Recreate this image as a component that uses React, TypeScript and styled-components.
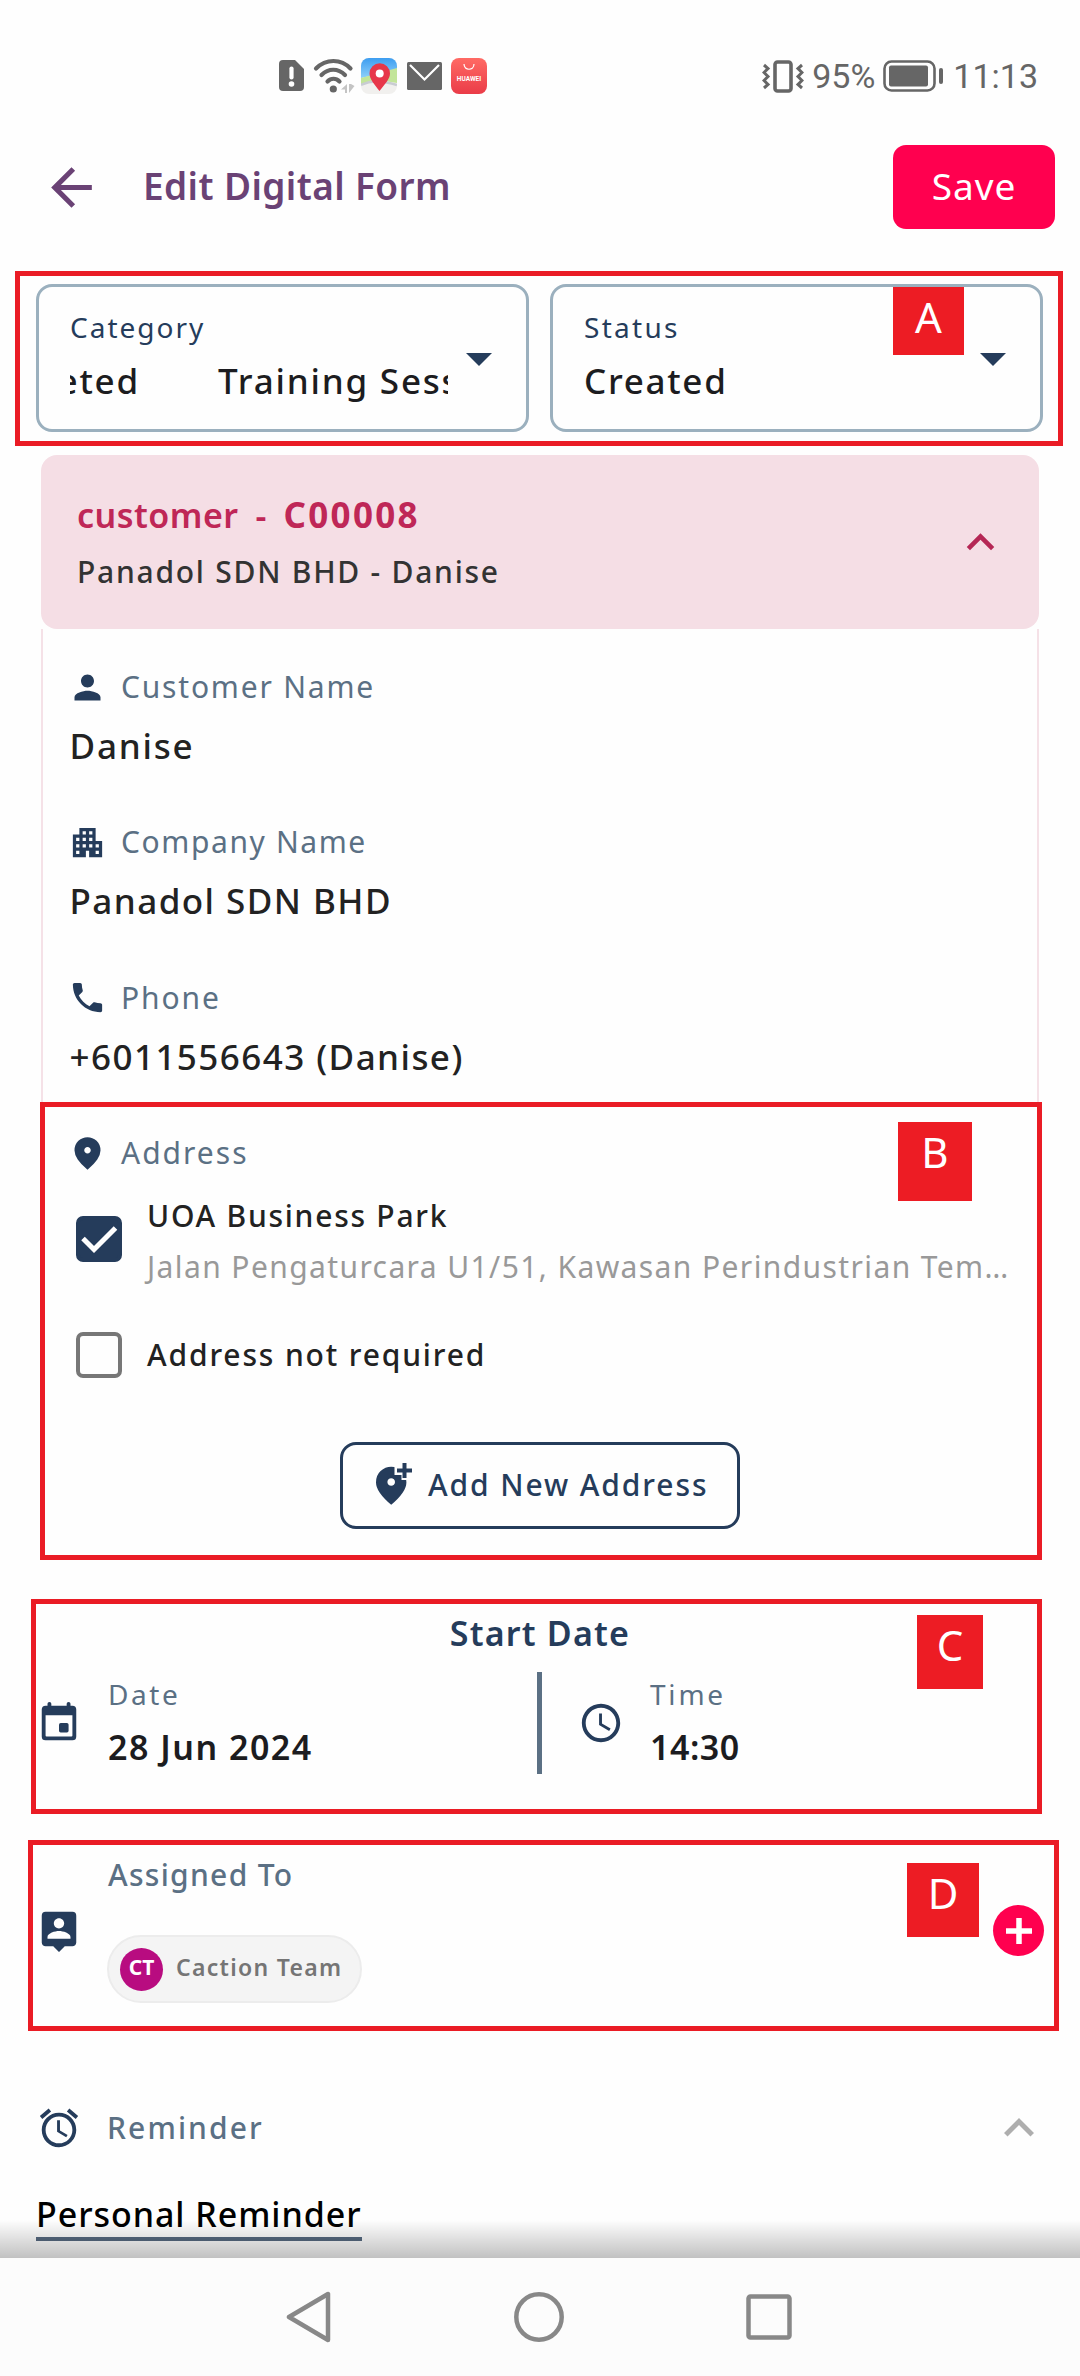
import React from "react";
import styled, { createGlobalStyle } from "styled-components";
import {
  MdAccessAlarm,
  MdApartment,
  MdArrowBack,
  MdExpandLess,
  MdOutlineAccessTime,
  MdPerson,
  MdPhone,
} from "react-icons/md";

const navy = "#253c5b";
const slate = "#5b7084";
const red = "#ea1c25";
const hotPink = "#ff004f";

const GlobalStyle = createGlobalStyle`
  * { box-sizing: border-box; }
  body { margin: 0; background: #fefefe; }
  svg { display: block; flex: none; }
`;

const Phone = styled.div`
  width: 1080px;
  height: 2376px;
  display: flex;
  flex-direction: column;
  background: #fefefe;
  font-family: "Noto Sans", "Open Sans", sans-serif;
  overflow: hidden;
`;

const Screen = styled.main`
  position: relative;
  height: 2258px;
  flex: none;
  overflow: hidden;
`;

const BottomShade = styled.div`
  position: absolute;
  left: 0;
  right: 0;
  bottom: 0;
  height: 38px;
  background: linear-gradient(rgba(0, 0, 0, 0), rgba(0, 0, 0, 0.12) 50%, rgba(0, 0, 0, 0.24));
`;

type TextProps = { $size: number; $line: number; $gap?: number; $weight?: number; $color: string };

const Text = styled.span<TextProps>`
  display: block;
  white-space: pre;
  font-size: ${(p) => p.$size}px;
  line-height: ${(p) => p.$line}px;
  letter-spacing: ${(p) => p.$gap ?? 0}px;
  font-weight: ${(p) => p.$weight ?? 400};
  color: ${(p) => p.$color};
`;

/* Status bar */

const StatusBar = styled.div`
  height: 120px;
  display: flex;
  align-items: center;
  justify-content: space-between;
  padding: 32px 42px 0 279px;
  font-family: Roboto, "Noto Sans", sans-serif;
`;

const StatusGroup = styled.div<{ $gap: number }>`
  display: flex;
  align-items: center;
  gap: ${(p) => p.$gap}px;
`;

const AppTile = styled.div`
  width: 36px;
  height: 36px;
  border-radius: 8px;
  background: linear-gradient(#ff6a64, #ea3c48);
  display: flex;
  flex-direction: column;
  align-items: center;
  padding-top: 6px;
  color: #fff;
  font: 700 6.5px/8px Roboto, sans-serif;
  gap: 4px;
`;

/* Header */

const Header = styled.header`
  height: 134px;
  display: flex;
  align-items: center;
  padding: 0 25px 0 41px;
`;

const HeaderTitle = styled.div`
  flex: 1;
  padding: 0 0 3px 41px;
`;

const SaveButton = styled.button`
  width: 162px;
  height: 84px;
  border: 0;
  border-radius: 13px;
  background: ${hotPink};
  display: flex;
  justify-content: center;
  align-items: center;
  padding: 0 0 3px;
  font-family: inherit;
`;

/* Highlight frames */

const Frame = styled.section<{ $left: number; $width: number; $height: number; $top: number }>`
  position: relative;
  margin: ${(p) => p.$top}px 0 0 ${(p) => p.$left}px;
  width: ${(p) => p.$width}px;
  height: ${(p) => p.$height}px;
  border: 5px solid ${red};
`;

const Badge = styled.div<{ $x: number; $y: number; $w: number; $h: number }>`
  position: absolute;
  left: ${(p) => p.$x}px;
  top: ${(p) => p.$y}px;
  width: ${(p) => p.$w}px;
  height: ${(p) => p.$h}px;
  background: #ed1c24;
  color: #fff;
  text-align: center;
  font-size: 42px;
  line-height: 59px;
`;

/* Selects */

const SelectRow = styled.div`
  display: flex;
  gap: 21px;
  padding: 8px 0 0 16px;
`;

const Select = styled.div`
  width: 493px;
  height: 148px;
  border: 3px solid #9bb0be;
  border-radius: 16px;
  display: flex;
  align-items: flex-start;
  padding: 18px 0 0 31px;
`;

const SelectText = styled.div`
  width: 378px;
  display: flex;
  flex-direction: column;
  gap: 7px;
`;

const Marquee = styled.div`
  display: flex;
  justify-content: flex-start;
  gap: 78px;
  overflow: hidden;
`;

const MarqueeTail = styled.div`
  width: 70px;
  flex: none;
  display: flex;
  justify-content: flex-end;
  overflow: hidden;
`;

const Caret = styled.svg`
  width: 26px;
  height: 13px;
  margin: 48px 0 0 18px;
`;

/* Customer card */

const CardHead = styled.div`
  width: 998px;
  height: 174px;
  margin: 9px 0 0 41px;
  border-radius: 16px;
  background: #f5dee5;
  display: flex;
  align-items: center;
  justify-content: space-between;
  padding: 0 31px 0 36px;
`;

const CardHeadText = styled.div`
  display: flex;
  flex-direction: column;
  gap: 11px;
`;

const CardCode = styled.div`
  display: flex;
  gap: 17px;
`;

const CardBody = styled.div`
  width: 998px;
  height: 473px;
  margin-left: 41px;
  border: solid #f5e1e7;
  border-width: 0 2px;
  padding: 36px 0 0 25px;
`;

const Detail = styled.div`
  height: 155.4px;
  display: flex;
  flex-direction: column;
  gap: 12px;
`;

const DetailValue = styled.div`
  padding-left: 1.5px;
`;

const IconLabel = styled.div`
  display: flex;
  align-items: center;
  gap: 14px;
  color: ${navy};
`;

/* Address */

const AddressBody = styled.div`
  padding: 24px 0 0 23px;
`;

const CheckRow = styled.label<{ $top: number }>`
  display: flex;
  align-items: center;
  gap: 25px;
  margin: ${(p) => p.$top}px 0 0 8px;
`;

const CheckLines = styled.div`
  display: flex;
  flex-direction: column;
  gap: 7px;
`;

const CheckBox = styled.span<{ $on?: boolean }>`
  width: 46px;
  height: 46px;
  flex: none;
  margin-bottom: ${(p) => (p.$on ? 6 : 0)}px;
  border-radius: 7px;
  border: 4px solid ${(p) => (p.$on ? navy : "#777")};
  background: ${(p) => (p.$on ? navy : "transparent")};
  display: flex;
  align-items: center;
  justify-content: center;
`;

const AddButton = styled.button`
  width: 400px;
  height: 87px;
  margin: 64px 0 0 272px;
  border: 3px solid ${navy};
  border-radius: 16px;
  background: transparent;
  display: flex;
  align-items: center;
  padding: 0 0 2px 32px;
  gap: 14px;
  font-family: inherit;
`;

/* Start date */

const StartBody = styled.div`
  width: 1008px;
  display: flex;
  flex-direction: column;
  align-items: center;
  padding-top: 5px;
  gap: 15px;
`;

const DateRow = styled.div`
  width: 100%;
  height: 102px;
  display: flex;
  align-items: center;
  color: ${navy};
`;

const DateCell = styled.div<{ $w: number }>`
  width: ${(p) => p.$w}px;
  display: flex;
  align-items: center;
  gap: 26px;
`;

const DateLines = styled.div`
  display: flex;
  flex-direction: column;
  gap: 10px;
  padding-bottom: 3px;
`;

const Rule = styled.div`
  width: 5px;
  height: 102px;
  margin-right: 36px;
  background: ${slate};
`;

/* Assigned to */

const AssignBody = styled.div`
  height: 171px;
  display: flex;
  align-items: center;
  padding: 0 10px 0 3px;
  color: ${navy};
`;

const AssignLines = styled.div`
  flex: 1;
  align-self: flex-start;
  padding: 8px 0 0 25px;
  display: flex;
  flex-direction: column;
  align-items: flex-start;
  gap: 38px;
`;

const AssignLabel = styled.div`
  padding-left: 1px;
`;

const Chip = styled.div`
  width: 255px;
  height: 68px;
  border: 2px solid #ececec;
  border-radius: 34px;
  background: #f4f4f4;
  display: flex;
  align-items: center;
  gap: 13px;
  padding-left: 11px;
`;

const ChipName = styled.div`
  padding-bottom: 4px;
`;

const Avatar = styled.div`
  width: 43px;
  height: 43px;
  border-radius: 50%;
  background: #b80c80;
  display: flex;
  justify-content: center;
`;

const RoundAdd = styled.button`
  width: 51px;
  height: 51px;
  border: 0;
  border-radius: 50%;
  background: ${hotPink};
  padding: 0;
  display: flex;
  align-items: center;
  justify-content: center;
`;

/* Reminder */

const ReminderRow = styled.div`
  margin-top: 72px;
  height: 50px;
  display: flex;
  align-items: center;
  padding: 0 31px 0 36px;
  color: ${navy};
`;

const ReminderLabel = styled.div`
  flex: 1;
  padding-left: 25px;
`;

const ReminderLink = styled.div`
  width: 326px;
  margin: 38px 0 0 36px;
  border-bottom: 4px solid #566980;
`;

const NavBar = styled.nav`
  height: 118px;
  flex: none;
  background: #fcfcfc;
  display: flex;
  align-items: center;
  justify-content: space-between;
  padding: 0 288px 0 285px;
`;

const pinPath =
  "M12 12q.825 0 1.413-.588T14 10t-.588-1.413T12 8t-1.413.588T10 10t.588 1.413T12 12m0 10q-4.025-3.425-6.012-6.362T4 10.2q0-3.75 2.413-5.975T12 2t5.588 2.225T20 10.2q0 2.5-1.987 5.438T12 22";

const SimIcon = () => (
  <svg width="26" height="32" viewBox="0 0 26 32">
    <path d="M4 0h12l9 9v18a4 4 0 0 1-4 4H4a4 4 0 0 1-4-4V4a4 4 0 0 1 4-4z" fill="#666" />
    <path d="M12.5 8.500v9" stroke="#fff" strokeWidth="4.200" strokeLinecap="round" />
    <circle cx="12.500" cy="24" r="2.800" fill="#fff" />
  </svg>
);

const WifiIcon = () => (
  <svg width="38" height="34" viewBox="0 0 38 34" overflow="visible">
    <g fill="none" stroke="#666" strokeWidth="4.200" strokeLinecap="round">
      <path d="M2 9.500C12-.5 27-.5 36.500 9.500" />
      <path d="M7.500 16C14.500 9 24 9 31 16" />
      <path d="M13.500 22.500c3.500-3.500 8.500-3.500 12 0" />
    </g>
    <circle cx="19.300" cy="30" r="3.600" fill="#666" />
    <path d="M33 25v9h-2v-3.500h-4zM35 34v-9h2l3.500 2z" fill="#c4c4c4" />
  </svg>
);

const MapsIcon = () => (
  <svg width="37" height="36" viewBox="0 0 37 36">
    <defs>
      <clipPath id="tile">
        <rect width="36" height="36" rx="8" />
      </clipPath>
      <linearGradient id="sky" x2="0" y2="1">
        <stop offset="0" stopColor="#3d9df0" />
        <stop offset="1" stopColor="#8ed0fa" />
      </linearGradient>
    </defs>
    <g clipPath="url(#tile)">
      <rect width="36" height="36" fill="#f1f0ee" />
      <path d="M0 0h36v12L0 20z" fill="url(#sky)" />
      <path d="M36 10v15L18 22 0 27V20z" fill="#c3e59a" />
      <path d="M0 27c10-5 24-4 36 0" fill="none" stroke="#c9ccd2" strokeWidth="2.500" />
    </g>
    <path d="M18.500 33C13 26 8.500 21 8.500 15.500a10 10 0 0 1 20.500 0C29 21 24 26 18.500 33z" fill="#e7374a" />
    <circle cx="18.700" cy="15.500" r="4" fill="#fff" />
  </svg>
);

const MailIcon = () => (
  <svg width="35" height="28" viewBox="0 0 35 28">
    <rect width="35" height="28" rx="1.500" fill="#666" />
    <path d="M3 3l14.500 14.500L32 3" fill="none" stroke="#fff" strokeWidth="2.200" />
  </svg>
);

const VibrateIcon = () => (
  <svg width="42" height="33" viewBox="0 0 42 33">
    <rect x="13" y="2" width="16" height="29" rx="2.500" fill="none" stroke="#666" strokeWidth="3.600" />
    <g fill="none" stroke="#666" strokeWidth="3">
      <path d="M2 5l4 3.500-4 4 4 4-4 4 4 4-4 3.500" />
      <path d="M40 5l-4 3.500 4 4-4 4 4 4-4 4 4 3.500" />
    </g>
  </svg>
);

const BatteryIcon = () => (
  <svg width="62" height="32" viewBox="0 0 62 32">
    <rect x="1.500" y="1.500" width="50" height="29" rx="7" fill="none" stroke="#666" strokeWidth="2.600" />
    <rect x="6" y="5.500" width="39" height="21" rx="2" fill="#666" />
    <rect x="56" y="8" width="4" height="16" rx="2" fill="#666" />
  </svg>
);

const PinIcon = () => (
  <svg width="39" height="39" viewBox="0 0 24 24" fill="currentColor">
    <path d={pinPath} />
  </svg>
);

const AddPinIcon = () => (
  <svg width="39" height="46" viewBox="0 0 39 46">
    <g transform="translate(-6.600 1) scale(1.900)">
      <path d={pinPath} fill={navy} />
    </g>
    <path d="M19.500 3h6V0H39v18H26.500v-5h-7z" fill="#fefefe" />
    <path d="M29.500 1v15M22 8.500h15" stroke={navy} strokeWidth="4" />
    <path d="M26.500 13h3.500v4.500h-3.500z" fill="none" />
  </svg>
);

const CalendarIcon = () => (
  <svg width="46" height="46" viewBox="0 0 24 24" fill="currentColor">
    <path
      fillRule="evenodd"
      d="M7 1a1 1 0 0 1 1 1v1h8V2a1 1 0 0 1 2 0v1h1a2 2 0 0 1 2 2v14a2 2 0 0 1-2 2H5a2 2 0 0 1-2-2V5a2 2 0 0 1 2-2h1V2a1 1 0 0 1 1-1zM5 8v10.500a.5.5 0 0 0 .5.500h13a.5.5 0 0 0 .5-.5V8z"
    />
    <rect x="12" y="12" width="5" height="5" rx="0.900" />
  </svg>
);

const AssigneeIcon = () => (
  <svg width="46" height="46" viewBox="0 0 24 24" fill="currentColor">
    <path d="M19 2H5a2 2 0 0 0-2 2v14c0 1.100.9 2 2 2h4l3 3 3-3h4c1.100 0 2-.9 2-2V4a2 2 0 0 0-2-2zm-7 3.300c1.490 0 2.700 1.210 2.700 2.700s-1.210 2.700-2.700 2.700S9.300 9.490 9.300 8s1.210-2.700 2.700-2.700zM18 16H6v-.9c0-2 4-3.100 6-3.100s6 1.100 6 3.100v.9z" />
  </svg>
);

const DownCaret = () => (
  <Caret viewBox="0 0 26 13">
    <path d="M0 0h26L13 13z" fill={navy} />
  </Caret>
);

type DetailItemProps = { icon: React.ReactNode; label: string; value: string; labelGap: number; valueGap: number };

const DetailItem = ({ icon, label, value, labelGap, valueGap }: DetailItemProps) => (
  <Detail>
    <IconLabel>
      {icon}
      <Text $size={30} $line={44} $gap={labelGap} $color={slate}>{label}</Text>
    </IconLabel>
    <DetailValue>
      <Text $size={35} $line={50} $gap={valueGap} $weight={500} $color="#222">{value}</Text>
    </DetailValue>
  </Detail>
);

export default function App() {
  return (
    <Phone>
      <GlobalStyle />
      <Screen>
        <StatusBar>
          <StatusGroup $gap={9}>
            <SimIcon />
            <WifiIcon />
            <MapsIcon />
            <MailIcon />
            <AppTile>
              <svg width="12" height="7" viewBox="0 0 12 7">
                <path d="M1 0c0 7 10 7 10 0" fill="none" stroke="#fff" strokeWidth="1.200" />
              </svg>
              HUAWEI
            </AppTile>
          </StatusGroup>
          <StatusGroup $gap={8}>
            <VibrateIcon />
            <Text $size={34} $line={40} $color="#666">95%</Text>
            <BatteryIcon />
            <Text $size={34} $line={40} $color="#666">11:13</Text>
          </StatusGroup>
        </StatusBar>

        <Header>
          <MdArrowBack size={61} color="#6a4275" />
          <HeaderTitle>
            <Text $size={37} $line={50} $gap={0.4} $weight={600} $color="#6a4275">Edit Digital Form</Text>
          </HeaderTitle>
          <SaveButton>
            <Text $size={37} $line={50} $gap={1} $color="#fff">Save</Text>
          </SaveButton>
        </Header>

        <Frame $left={15} $top={17} $width={1048} $height={175}>
          <SelectRow>
            <Select>
              <SelectText>
                <Text $size={28} $line={44} $gap={2} $color={navy}>Category</Text>
                <Marquee>
                  <MarqueeTail>
                    <Text $size={35} $line={50} $gap={1.8} $weight={500} $color="#1c1c20">eted</Text>
                  </MarqueeTail>
                  <Text $size={35} $line={50} $gap={1.8} $weight={500} $color="#1c1c20">Training Sess</Text>
                </Marquee>
              </SelectText>
              <DownCaret />
            </Select>
            <Select>
              <SelectText>
                <Text $size={28} $line={44} $gap={2.3} $color={navy}>Status</Text>
                <Text $size={35} $line={50} $gap={1.7} $weight={500} $color="#1c1c20">Created</Text>
              </SelectText>
              <DownCaret />
            </Select>
          </SelectRow>
          <Badge $x={873} $y={11} $w={71} $h={68}>A</Badge>
        </Frame>

        <CardHead>
          <CardHeadText>
            <CardCode>
              <Text $size={34} $line={48} $gap={0.5} $weight={600} $color="#bf2757">customer</Text>
              <Text $size={34} $line={48} $weight={600} $color="#bf2757">-</Text>
              <Text $size={35} $line={48} $gap={2.3} $weight={700} $color="#bf2757">C00008</Text>
            </CardCode>
            <Text $size={30} $line={44} $gap={1.75} $weight={500} $color="#333">Panadol SDN BHD - Danise</Text>
          </CardHeadText>
          <MdExpandLess size={55} color="#b52755" />
        </CardHead>

        <CardBody>
          <DetailItem icon={<MdPerson size={39} />} label="Customer Name" value="Danise" labelGap={1.8} valueGap={1.8} />
          <DetailItem icon={<MdApartment size={39} />} label="Company Name" value="Panadol SDN BHD" labelGap={1.6} valueGap={1.45} />
          <DetailItem icon={<MdPhone size={39} />} label="Phone" value="+6011556643 (Danise)" labelGap={1.9} valueGap={1.45} />
        </CardBody>

        <Frame $left={40} $top={0} $width={1002} $height={458}>
          <AddressBody>
            <IconLabel>
              <PinIcon />
              <Text $size={30} $line={44} $gap={2} $color={slate}>Address</Text>
            </IconLabel>
            <CheckRow $top={19}>
              <CheckBox $on>
                <svg width="38" height="38" viewBox="0 0 38 38">
                  <path d="M3 18.500l11 11L35.500 8" fill="none" stroke="#fff" strokeWidth="5" />
                </svg>
              </CheckBox>
              <CheckLines>
                <Text $size={30} $line={44} $gap={1.75} $weight={500} $color="#222">UOA Business Park</Text>
                <Text $size={30} $line={44} $gap={1.4} $color="#999">Jalan Pengaturcara U1/51, Kawasan Perindustrian Tem…</Text>
              </CheckLines>
            </CheckRow>
            <CheckRow $top={43}>
              <CheckBox />
              <Text $size={30} $line={44} $gap={1.85} $weight={500} $color="#222">Address not required</Text>
            </CheckRow>
            <AddButton>
              <AddPinIcon />
              <Text $size={30} $line={44} $gap={1.9} $weight={500} $color={navy}>Add New Address</Text>
            </AddButton>
          </AddressBody>
          <Badge $x={853} $y={15} $w={74} $h={79}>B</Badge>
        </Frame>

        <Frame $left={31} $top={39} $width={1011} $height={215}>
          <StartBody>
            <Text $size={34} $line={48} $gap={1.2} $weight={600} $color={navy}>Start Date</Text>
            <DateRow>
              <DateCell $w={501}>
                <CalendarIcon />
                <DateLines>
                  <Text $size={28} $line={40} $gap={2.6} $color={slate}>Date</Text>
                  <Text $size={34} $line={46} $gap={1.5} $weight={600} $color="#1c1c20">28 Jun 2024</Text>
                </DateLines>
              </DateCell>
              <Rule />
              <DateCell $w={400}>
                <MdOutlineAccessTime size={46} />
                <DateLines>
                  <Text $size={28} $line={40} $gap={2.8} $color={slate}>Time</Text>
                  <Text $size={34} $line={46} $gap={0.5} $weight={600} $color="#1c1c20">14:30</Text>
                </DateLines>
              </DateCell>
            </DateRow>
          </StartBody>
          <Badge $x={881} $y={11} $w={66} $h={74}>C</Badge>
        </Frame>

        <Frame $left={28} $top={26} $width={1031} $height={191}>
          <AssignBody>
            <AssigneeIcon />
            <AssignLines>
              <AssignLabel>
                <Text $size={30} $line={44} $gap={1.3} $weight={500} $color={slate}>Assigned To</Text>
              </AssignLabel>
              <Chip>
                <Avatar>
                  <Text $size={21} $line={39} $weight={700} $color="#fff">CT</Text>
                </Avatar>
                <ChipName>
                  <Text $size={23} $line={34} $gap={1.3} $weight={600} $color="#757575">Caction Team</Text>
                </ChipName>
              </Chip>
            </AssignLines>
            <RoundAdd>
              <svg width="26" height="26" viewBox="0 0 26 26">
                <path d="M13 0v26M0 13h26" stroke="#fff" strokeWidth="5.500" />
              </svg>
            </RoundAdd>
          </AssignBody>
          <Badge $x={874} $y={18} $w={72} $h={74}>D</Badge>
        </Frame>

        <ReminderRow>
          <MdAccessAlarm size={46} />
          <ReminderLabel>
            <Text $size={30} $line={44} $gap={2.1} $weight={500} $color={slate}>Reminder</Text>
          </ReminderLabel>
          <MdExpandLess size={60} color="#aeaeae" />
        </ReminderRow>
        <ReminderLink>
          <Text $size={34} $line={46} $gap={0.95} $weight={500} $color="#000">Personal Reminder</Text>
        </ReminderLink>
        <BottomShade />
      </Screen>

      <NavBar>
        <svg width="46" height="52" viewBox="0 0 46 52">
          <path d="M43 3v46L4 26z" fill="none" stroke="#888" strokeWidth="4.500" strokeLinejoin="round" />
        </svg>
        <svg width="51" height="50" viewBox="-1 0 51 50">
          <circle cx="25" cy="25" r="22.700" fill="none" stroke="#888" strokeWidth="4.500" />
        </svg>
        <svg width="46" height="46" viewBox="0 0 46 46">
          <rect x="2.500" y="2.500" width="41" height="41" rx="2" fill="none" stroke="#888" strokeWidth="4.500" />
        </svg>
      </NavBar>
    </Phone>
  );
}
